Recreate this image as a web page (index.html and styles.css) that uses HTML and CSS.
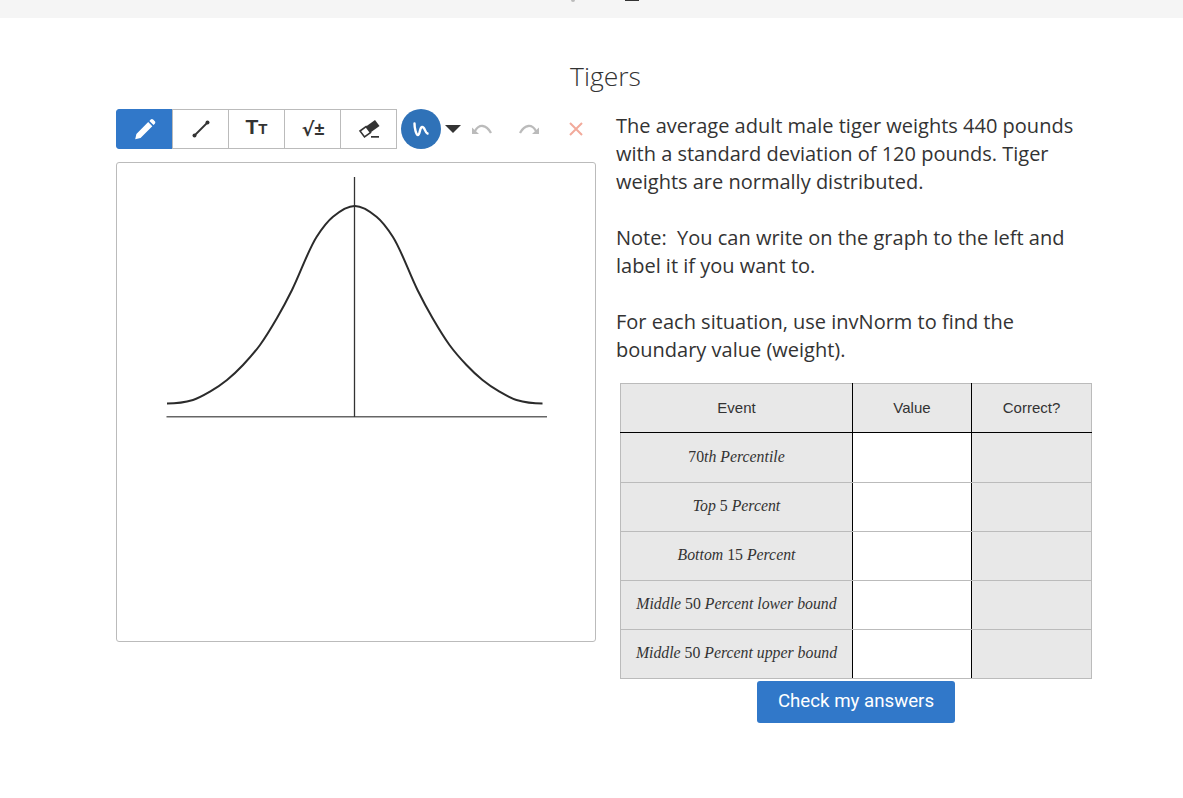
FILE: index.html
```html
<!DOCTYPE html>
<html lang="en">
<head>
  <meta charset="UTF-8">
  <meta name="viewport" content="width=device-width, initial-scale=1.0">
  <title>Tigers</title>
  <link rel="stylesheet" href="styles.css">
</head>
<body>
  <div class="top-bar">
    <span class="top-bit-gray"></span>
    <span class="top-bit-dark"></span>
  </div>

  <h1 class="title">Tigers</h1>

  <div class="main">
    <div class="left">
      <div class="toolbar">
        <div class="tool-group">
          <button class="tool active">
            <svg width="24" height="24" viewBox="0 0 24 24"><path fill="#fff" d="M2.200 22.200l1.200-5.300L15.200 5.100l4.100 4.100L7.500 21zM16.400 3.900l1.300-1.300c.7-.7 1.700-.7 2.400 0l1.700 1.700c.7.7.7 1.700 0 2.400l-1.300 1.300z"/></svg>
          </button>
          <button class="tool">
            <svg width="20" height="20" viewBox="0 0 20 20"><path d="M3.500 16.500L16.500 3.500" stroke="#333" stroke-width="1.800"/><circle cx="3.500" cy="16.500" r="2" fill="#333"/><circle cx="16.500" cy="3.500" r="2" fill="#333"/></svg>
          </button>
          <button class="tool tool-text"><span class="big-t">T</span><span class="small-t">T</span></button>
          <button class="tool tool-math"><span class="root">√</span><span class="plus-minus">±</span></button>
          <button class="tool">
            <svg width="24" height="24" viewBox="0 0 24 24">
              <path fill="#333" d="M18 3L22.500 9L13.500 15.600L9 9.600z"/>
              <path fill="#fff" stroke="#333" stroke-width="1.600" d="M9 9.600L13.500 15.600L7.500 20L3 14z"/>
              <path fill="#333" d="M14 19h8v1.700h-8z"/>
            </svg>
          </button>
        </div>
        <button class="pen-round">
          <svg width="22" height="22" viewBox="0 0 22 22"><path fill="none" stroke="#fff" stroke-width="2.400" stroke-linecap="round" d="M4.500 5.500C4.500 10 6 17 8 17C10 17 9.500 9.500 12 9C15 8.500 14.500 14.500 17.500 15.500"/></svg>
        </button>
        <span class="caret"></span>
        <button class="plain undo">
          <svg width="22" height="12" viewBox="0 0 22 12"><path fill="none" stroke="#bbb" stroke-width="2.300" d="M4 8C8 1 15 1 20 10"/><path fill="#bbb" d="M1 4.500l7 6.500H1z"/></svg>
        </button>
        <button class="plain redo">
          <svg width="22" height="12" viewBox="0 0 22 12"><path fill="none" stroke="#bbb" stroke-width="2.300" d="M18 8C14 1 7 1 2 10"/><path fill="#bbb" d="M21 4.500L14 11h7z"/></svg>
        </button>
        <button class="plain clear">
          <svg width="16" height="16" viewBox="0 0 16 16"><path stroke="#f2aa9b" stroke-width="2" d="M2 2l12 12M14 2L2 14"/></svg>
        </button>
      </div>

      <div class="board">
        <svg class="graph" viewBox="117 163 478 478">
          <path class="axis" d="M166.500 416.800H547"/>
          <path class="mean" d="M354.500 177V417"/>
          <path class="curve" d="M167 403.500C175.670 403.500 184.330 402.600 193 400C198.670 398.300 204.330 395 210 391.700C215.670 388.360 221.330 384.600 227 380C232.330 375.680 237.670 370.650 243 365C248.670 359 254.330 352.820 260 345C265.670 337.180 271.330 327.750 277 318C282 309.400 287 300.150 292 290C300.230 273.300 308.470 249.460 316.700 236.700C322.130 228.280 327.570 221.100 333 216.700C340.170 210.900 347.330 206 354.500 206"/>
          <path class="curve" transform="matrix(-1 0 0 1 709.500 0)" d="M167 403.500C175.670 403.500 184.330 402.600 193 400C198.670 398.300 204.330 395 210 391.700C215.670 388.360 221.330 384.600 227 380C232.330 375.680 237.670 370.650 243 365C248.670 359 254.330 352.820 260 345C265.670 337.180 271.330 327.750 277 318C282 309.400 287 300.150 292 290C300.230 273.300 308.470 249.460 316.700 236.700C322.130 228.280 327.570 221.100 333 216.700C340.170 210.900 347.330 206 354.500 206"/>
        </svg>
      </div>
    </div>

    <div class="right">
      <p>The average adult male tiger weights 440 pounds with a standard deviation of 120 pounds. Tiger weights are normally distributed.</p>
      <p>Note:&nbsp; You can write on the graph to the left and label it if you want to.</p>
      <p>For each situation, use invNorm to find the boundary value (weight).</p>

      <table class="answers">
        <tr class="head">
          <th>Event</th>
          <th class="blank">Value</th>
          <th>Correct?</th>
        </tr>
        <tr class="first-row">
          <td class="event"><span class="num">70</span>th Percentile</td>
          <td class="blank"></td>
          <td></td>
        </tr>
        <tr>
          <td class="event">Top <span class="num">5</span> Percent</td>
          <td class="blank"></td>
          <td></td>
        </tr>
        <tr>
          <td class="event">Bottom <span class="num">15</span> Percent</td>
          <td class="blank"></td>
          <td></td>
        </tr>
        <tr>
          <td class="event">Middle <span class="num">50</span> Percent lower bound</td>
          <td class="blank"></td>
          <td></td>
        </tr>
        <tr>
          <td class="event">Middle <span class="num">50</span> Percent upper bound</td>
          <td class="blank"></td>
          <td></td>
        </tr>
      </table>
      <div class="check-row">
        <button class="check">Check my answers</button>
      </div>
    </div>
  </div>
</body>
</html>
```

FILE: styles.css
```css
* { box-sizing: border-box; }
body {
  margin: 0; background: #fff; color: #333;
  font-family: "Open Sans", Arial, sans-serif;
}
button { font-family: inherit; cursor: pointer; }

.top-bar {
  height: 18px; background: #f5f5f5; overflow: hidden;
  display: flex; justify-content: center; gap: 50px; padding-left: 27px;
}
.top-bit-gray { width: 4px; height: 2px; background: #bbb; border-radius: 0 0 2px 2px; }
.top-bit-dark { width: 14px; height: 1px; background: #333; }

.title {
  margin: 41px 0 0; height: 50px; padding-left: 28px;
  text-align: center; font-size: 26.500px; font-weight: 300; line-height: 34px; color: #333;
}

.main { display: flex; gap: 20px; padding-left: 116px; }
.left { width: 480px; }
.right { width: 476px; }

.toolbar { display: flex; align-items: center; height: 40px; }
.tool-group { display: flex; }
.tool {
  width: 57px; height: 40px; margin-left: -1px; padding: 0;
  display: flex; align-items: center; justify-content: center;
  background: #fff; border: 1px solid #bbb; color: #333;
}
.tool:first-child { margin-left: 0; border-radius: 3px 0 0 3px; }
.tool.active { background: #3178c9; border-color: #3178c9; }
.tool-text { font-family: "Liberation Sans", Arial, sans-serif; font-weight: bold; align-items: baseline; padding-top: 5px; }
.big-t { font-size: 21px; line-height: 24px; }
.small-t { font-size: 15px; line-height: 24px; }
.tool-math { font-weight: bold; padding-left: 1px; }
.root { font-family: "DejaVu Sans", sans-serif; font-size: 19px; line-height: 24px; }
.plus-minus { font-family: "Liberation Sans", Arial, sans-serif; font-size: 18px; line-height: 24px; }

.pen-round {
  width: 40px; height: 40px; margin-left: 4px; padding: 0; border: 0; border-radius: 50%;
  background: #2f72b8; display: flex; align-items: center; justify-content: center;
}
.caret {
  width: 0; height: 0; margin-left: 4px;
  border-left: 8px solid transparent; border-right: 8px solid transparent;
  border-top: 8px solid #333;
}
.plain { padding: 0; border: 0; background: none; display: flex; }
.undo { margin-left: 10px; }
.redo { margin-left: 25px; }
.clear { margin-left: 28px; }

.board { width: 480px; height: 480px; margin-top: 13px; border: 1px solid #bbb; border-radius: 3px; }
.graph { display: block; width: 478px; height: 478px; }
.curve { fill: none; stroke: #2b2b2b; stroke-width: 2; }
.axis { fill: none; stroke: #666; stroke-width: 1.500; }
.mean { fill: none; stroke: #333; stroke-width: 1.300; }

.right p { max-width: 468px; margin: 0 0 28px; font-size: 20px; line-height: 28px; color: #333; }
.right p:first-child { margin-top: 3px; }

.answers {
  width: 472px; margin-left: 4px; margin-top: -9px;
  border-collapse: collapse; table-layout: fixed;
  font-family: "Liberation Sans", Arial, sans-serif; font-size: 15px; color: #333;
}
.answers th, .answers td {
  height: 49px; padding: 0 0 2px; text-align: center; font-weight: normal;
  background: #e8e8e8; border: 1px solid #bbb;
}
.answers .first-row td { height: 50px; }
.answers th:first-child, .answers td:first-child { width: 232px; border-right: 1px solid #000; }
.answers .blank { width: 119px; border-left: 1px solid #000; border-right: 1px solid #000; }
.answers td.blank { background: #fff; }
.head th { border-bottom: 1px solid #000; }
.answers .event { font-family: "Liberation Serif", "Times New Roman", serif; font-size: 15.800px; font-style: italic; }
.num { font-style: normal; }

.check-row { display: flex; justify-content: center; width: 472px; margin-left: 4px; margin-top: 2px; }
.check {
  width: 198px; height: 42px; padding: 0 0 2px; border: 0; border-radius: 3px;
  background: #3178c9; color: #fff; font-family: Roboto, Arial, sans-serif; font-size: 18.700px;
}
```
